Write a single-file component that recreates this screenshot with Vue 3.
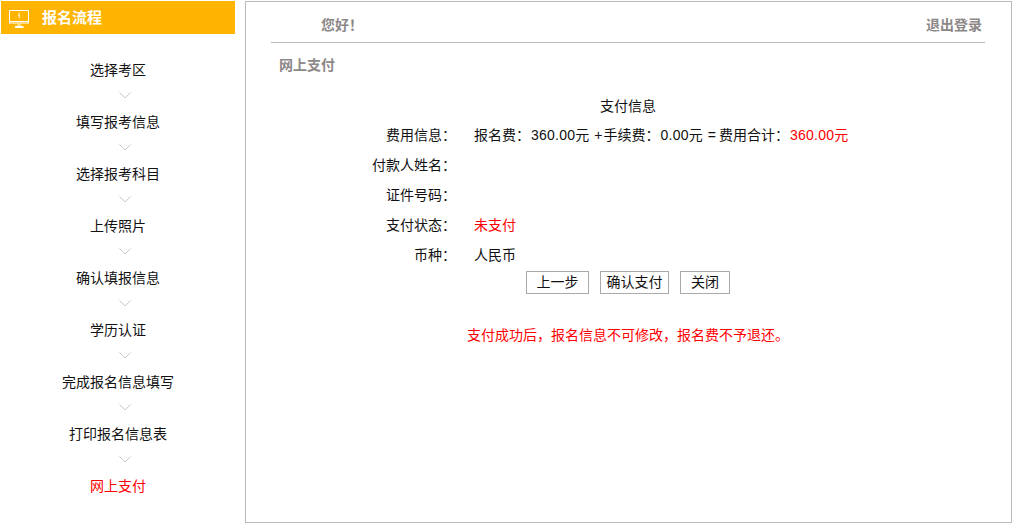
<script setup>
const steps = ['选择考区','填写报考信息','选择报考科目','上传照片','确认填报信息','学历认证','完成报名信息填写','打印报名信息表','网上支付']
</script>

<template>
  <div class="page">
    <aside class="side">
      <div class="side-head">
        <svg class="monitor" width="20" height="18" viewBox="0 0 20 18" fill="none">
          <rect x="0.5" y="0.5" width="19" height="12.5" fill="none" stroke="#fff"/>
          <path d="M1 11.5H19" stroke="#fff"/>
          <path d="M10.5 3L9.5 5.5H10.5L10 8" stroke="#fff"/>
          <path d="M9 13.5V16M11 13.5V16" stroke="#fff"/>
          <path d="M6 17H14.5" stroke="#fff" stroke-width="2"/>
        </svg>
        <span class="side-title">报名流程</span>
      </div>
      <ul class="steps">
        <li v-for="(s, i) in steps" :key="s" class="step" :class="{ last: i === steps.length - 1 }">
          <span class="step-label">{{ s }}</span>
          <svg v-if="i < steps.length - 1" class="chev" width="12" height="7" viewBox="0 0 12 7" fill="none">
            <path d="M0.5 0.5L6 6L11.5 0.5" stroke="#c8c8c8"/>
          </svg>
        </li>
      </ul>
    </aside>
    <main class="panel">
      <header class="top">
        <span class="hello">您好！</span>
        <span class="logout">退出登录</span>
      </header>
      <h2 class="sub">网上支付</h2>
      <h3 class="info-title">支付信息</h3>
      <div class="row">
        <span class="k">费用信息：</span>
        <span class="v">报名费：<span class="num">360.00</span>元<span class="op">+</span>手续费：<span class="num">0.00</span>元<span class="op eq">=</span>费用合计：<span class="red"><span class="num">360.00</span>元</span></span>
      </div>
      <div class="row"><span class="k">付款人姓名：</span><span class="v"></span></div>
      <div class="row"><span class="k">证件号码：</span><span class="v"></span></div>
      <div class="row"><span class="k">支付状态：</span><span class="v red">未支付</span></div>
      <div class="row"><span class="k">币种：</span><span class="v">人民币</span></div>
      <div class="btns">
        <button class="btn b1">上一步</button>
        <button class="btn b2">确认支付</button>
        <button class="btn b3">关闭</button>
      </div>
      <p class="note">支付成功后，报名信息不可修改，报名费不予退还。</p>
    </main>
  </div>
</template>

<style scoped>
.page {
  display: flex;
  width: 1012px;
  height: 524px;
  box-sizing: border-box;
  padding: 1px 0 1px 1px;
  font: 14px/20px "Liberation Sans", "Noto Sans CJK SC", sans-serif;
  color: #111;
  overflow: hidden;
}
.side { width: 234px; margin-right: 10px; flex: none; }
.side-head {
  height: 33px;
  background: #ffb400;
  display: flex;
  align-items: center;
  padding-left: 8px;
  color: #fff;
}
.monitor { margin: 3px 13px 0 0; flex: none; }
.side-title { font-size: 15px; font-weight: 700; }
.steps { list-style: none; margin: 0; padding: 26px 0 0; }
.step { height: 52px; display: flex; flex-direction: column; align-items: center; }
.step-label { height: 20px; }
.chev { margin: 12px 0 0 14px; }
.last .step-label { color: #f00; }
.panel {
  width: 767px;
  height: 522px;
  flex: none;
  box-sizing: border-box;
  border: 1px solid #b9b9b9;
  padding: 0 26px 0 25px;
}
.top {
  height: 41px;
  border-bottom: 1px solid #b9b9b9;
  display: flex;
  justify-content: space-between;
  align-items: center;
  padding: 5px 3px 0 50px;
  box-sizing: border-box;
  color: #8c8888;
}
.hello, .logout { font-weight: 700; }
.sub {
  margin: 12px 0 0 8px;
  font-size: 14px;
  line-height: 20px;
  font-weight: 700;
  color: #8c8888;
}
.info-title {
  margin: 21px 0 0;
  padding-left: 329px;
  font-size: 14px;
  line-height: 20px;
  font-weight: 400;
}
.row { display: flex; height: 30px; line-height: 20px; align-items: flex-start; padding-top: 9px; box-sizing: border-box; }
.k { width: 185px; text-align: right; flex: none; }
.v { margin-left: 18px; white-space: nowrap; }
.num { letter-spacing: 0.25px; margin-left: 1px; }
.op { margin: 0 1px 0 5px; }
.eq { margin-left: 5px; margin-right: 3px; }
.red { color: #f00; }
.btns { display: flex; margin: 5px 0 0 255px; }
.btn {
  height: 23px;
  box-sizing: border-box;
  background: #fff;
  border: 1px solid #aaa;
  padding: 0;
  font: inherit;
  line-height: 21px;
  color: #111;
  border-radius: 0;
}
.b1 { width: 63px; margin-right: 11px; }
.b2 { width: 69px; margin-right: 11px; }
.b3 { width: 50px; }
.note { margin: 31px 0 0 196px; color: #f00; }
</style>
